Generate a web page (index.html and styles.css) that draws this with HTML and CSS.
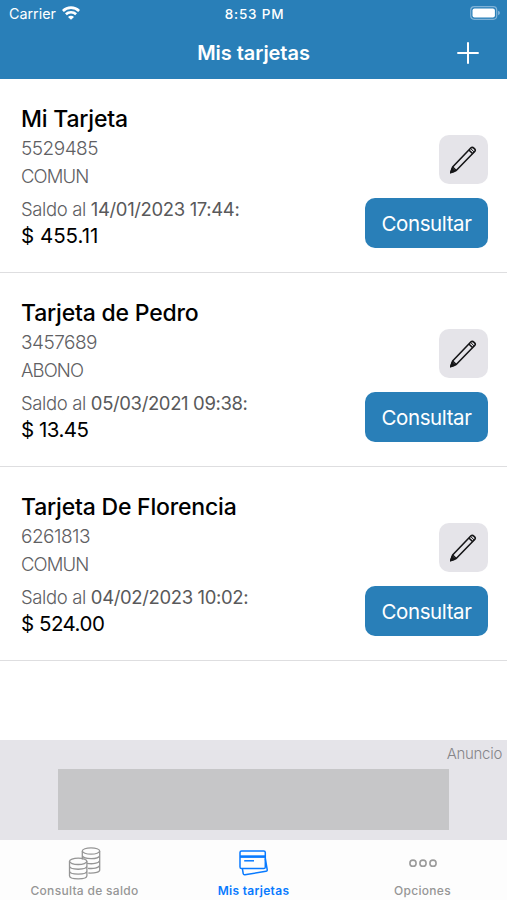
FILE: index.html
```html
<!DOCTYPE html>
<html lang="es">
<head>
<meta charset="utf-8">
<title>Mis tarjetas</title>
<link rel="stylesheet" href="styles.css">
</head>
<body>
<svg width="0" height="0" class="defs">
  <symbol id="pencil" viewBox="0 0 30 30">
    <g fill="none" stroke="#151517" stroke-width="1.600" stroke-linejoin="round">
      <path d="M1.800 27.600l1.800-5.600L22 2.800c1.700-1.500 5.300 1.700 3.900 3.500L7.200 25.500z"/>
      <path d="M3.600 22l3.600 3.500M19.900 5l3.900 3.800"/>
      <path d="M21.700 3.500l3.600 3.700" stroke-width="1"/>
      <path d="M1.800 27.600l1.300-3.800 2.600 2.400z" fill="#151517"/>
    </g>
  </symbol>
</svg>
<div class="screen">
  <header class="top">
    <div class="status">
      <div class="carrier"><span>Carrier</span>
        <svg class="wifi" width="18" height="14" viewBox="0 0 18 14" fill="none" stroke="#fff" stroke-width="2.600"><path d="M.9 5a11.500 11.500 0 0 1 16.200 0M3.900 8.300a7.300 7.300 0 0 1 10.200 0"/><path d="M9 13.800L6 10.900a4.200 4.200 0 0 1 6 0z" fill="#fff" stroke="none"/></svg>
      </div>
      <div class="time">8:53 PM</div>
      <svg class="battery" width="30" height="14" viewBox="0 0 30 14"><rect x=".7" y=".7" width="26" height="12.600" rx="3.500" fill="none" stroke="#7fb2d7" stroke-width="1.200"/><rect x="2.500" y="2.500" width="22.400" height="9" rx="2" fill="#fff"/><path d="M28 4.800q2 .6 2 2.200t-2 2.200z" fill="#7fb2d7"/></svg>
    </div>
    <div class="nav">
      <h1>Mis tarjetas</h1>
      <svg class="plus" width="22" height="22" viewBox="0 0 22 22" stroke="#fff" stroke-width="2"><path d="M11 .3v21.400M.3 11h21.400"/></svg>
    </div>
  </header>
  <main class="list">
    <section class="card">
      <div class="info"><h2>Mi Tarjeta</h2><p class="id">5529485</p><p class="kind">COMUN</p><p class="date"><span>Saldo al</span> 14/01/2023 17:44:</p><p class="amount">$ 455.11</p></div>
      <div class="actions"><button class="edit" aria-label="Editar"><svg width="30" height="30"><use href="#pencil"/></svg></button><button class="consult">Consultar</button></div>
    </section>
    <section class="card">
      <div class="info"><h2>Tarjeta de Pedro</h2><p class="id">3457689</p><p class="kind">ABONO</p><p class="date"><span>Saldo al</span> 05/03/2021 09:38:</p><p class="amount tight">$ 13.45</p></div>
      <div class="actions"><button class="edit" aria-label="Editar"><svg width="30" height="30"><use href="#pencil"/></svg></button><button class="consult">Consultar</button></div>
    </section>
    <section class="card">
      <div class="info"><h2>Tarjeta De Florencia</h2><p class="id">6261813</p><p class="kind">COMUN</p><p class="date"><span>Saldo al</span> 04/02/2023 10:02:</p><p class="amount tight">$ 524.00</p></div>
      <div class="actions"><button class="edit" aria-label="Editar"><svg width="30" height="30"><use href="#pencil"/></svg></button><button class="consult">Consultar</button></div>
    </section>
  </main>
  <aside class="ad"><div class="adlabel">Anuncio</div><div class="banner"></div></aside>
  <nav class="tabs">
    <a class="tab">
      <svg width="34" height="34" viewBox="0 0 34 34" fill="none" stroke="#959595" stroke-width="1.300"><ellipse cx="23" cy="5" rx="8.700" ry="3.200"/><path d="M14.300 5v8.500M31.700 5v19c0 2-4 3.300-11.300 3M14.300 9.700c1.500 3.800 16 4 17.400 0M19 17.300c5 1 11.700.2 12.700-2.700M20 22.300c5 .6 10.700-.2 11.700-2.800"/><ellipse cx="10.200" cy="15.300" rx="8.700" ry="3.200"/><path d="M1.500 15.300v14.500c0 4.200 17.400 4.200 17.400 0V15.300M1.500 20.100c0 4.200 17.400 4.200 17.400 0M1.500 25c0 4.200 17.400 4.200 17.400 0"/></svg>
      <span>Consulta de saldo</span>
    </a>
    <a class="tab active">
      <svg width="34" height="34" viewBox="0 0 34 34" fill="none" stroke="#087aff" stroke-width="1.500"><rect x="3" y="5" width="25.300" height="17.500" rx="1.600"/><path d="M3 10.600h25.300" stroke-width="2.600"/><path d="M7.200 14.800H17"/><path d="M5.400 22.700l.8 4.900q.3 1.400 1.700 1.200l21-3.500q1.600-.3 1.300-1.700L28.300 12.500"/></svg>
      <span>Mis tarjetas</span>
    </a>
    <a class="tab">
      <svg width="34" height="34" viewBox="0 0 34 34" fill="none" stroke="#9b9b9b" stroke-width="1.600"><circle cx="7" cy="17.200" r="3.100"/><circle cx="17" cy="17.200" r="3.100"/><circle cx="27" cy="17.200" r="3.100"/></svg>
      <span>Opciones</span>
    </a>
  </nav>
</div>
</body>
</html>
```
FILE: styles.css
```css
* { box-sizing: border-box; margin: 0; padding: 0; }
body { font-family: Inter, "Liberation Sans", sans-serif; background: #fff; color: #000; }
svg { display: block; }
.defs { position: absolute; }
.screen { width: 507px; height: 900px; display: flex; flex-direction: column; overflow: hidden; }
.top { height: 79px; flex: none; background: #297fb8; color: #fff; }
.status { height: 27px; display: grid; grid-template-columns: 1fr auto 1fr; align-items: center; padding: 0 7px 0 9px; }
.carrier { display: flex; align-items: center; gap: 6px; font-size: 14.300px; line-height: 27px; }
.wifi { margin-top: -1px; }
.time { font-size: 13.500px; font-weight: 500; letter-spacing: .8px; }
.battery { justify-self: end; margin-top: -1px; }
.nav { height: 51px; display: grid; grid-template-columns: 1fr auto 1fr; align-items: center; padding: 0 28px; }
.nav h1 { grid-column: 2; font-size: 20px; font-weight: 600; letter-spacing: -.05px; line-height: 50px; }
.plus { justify-self: end; }
.list { flex: 1; }
.card { height: 194px; padding: 24px 19px 0 21px; display: flex; justify-content: space-between; border-bottom: 1px solid #dedee0; }
.info h2 { font-size: 23px; line-height: 32px; font-weight: 500; white-space: nowrap; letter-spacing: -.2px; }
.info p { line-height: 27px; white-space: nowrap; }
.id { font-size: 19px; font-weight: 300; color: #606063; letter-spacing: -.5px; }
.kind { font-size: 18.500px; font-weight: 300; color: #606063; letter-spacing: -.9px; padding-top: 1px; }
.date { font-size: 18.500px; color: #59595b; letter-spacing: -.37px; margin-top: 6px; }
.date span { font-weight: 300; color: #606063; }
.info .amount { font-size: 20.500px; line-height: 26px; }
.info .tight { letter-spacing: -.5px; }
.actions { display: flex; flex-direction: column; align-items: flex-end; padding-top: 32px; gap: 14px; }
button { border: 0; font-family: inherit; display: flex; align-items: center; justify-content: center; }
.edit { width: 49px; height: 49px; border-radius: 10px; background: #e5e4e9; }
.consult { width: 123px; height: 50px; border-radius: 10px; background: #297fb8; color: #fff; font-size: 20.500px; letter-spacing: -.4px; }
.ad { height: 100px; flex: none; background: #e5e4e9; display: flex; flex-direction: column; align-items: center; }
.adlabel { align-self: flex-end; padding-right: 5px; font-size: 15px; font-weight: 300; letter-spacing: -.3px; line-height: 28px; color: #858589; }
.banner { width: 391px; height: 61px; margin-top: 1px; background: #c6c6c8; }
.tabs { height: 60px; flex: none; display: grid; grid-template-columns: repeat(3, 1fr); background: #fdfdfd; }
.tab { display: flex; flex-direction: column; align-items: center; padding-top: 6px; color: #969696; font-size: 12px; letter-spacing: .3px; font-weight: 500; }
.tab span { line-height: 22px; white-space: nowrap; }
.active { color: #087aff; font-weight: 600; }
```
